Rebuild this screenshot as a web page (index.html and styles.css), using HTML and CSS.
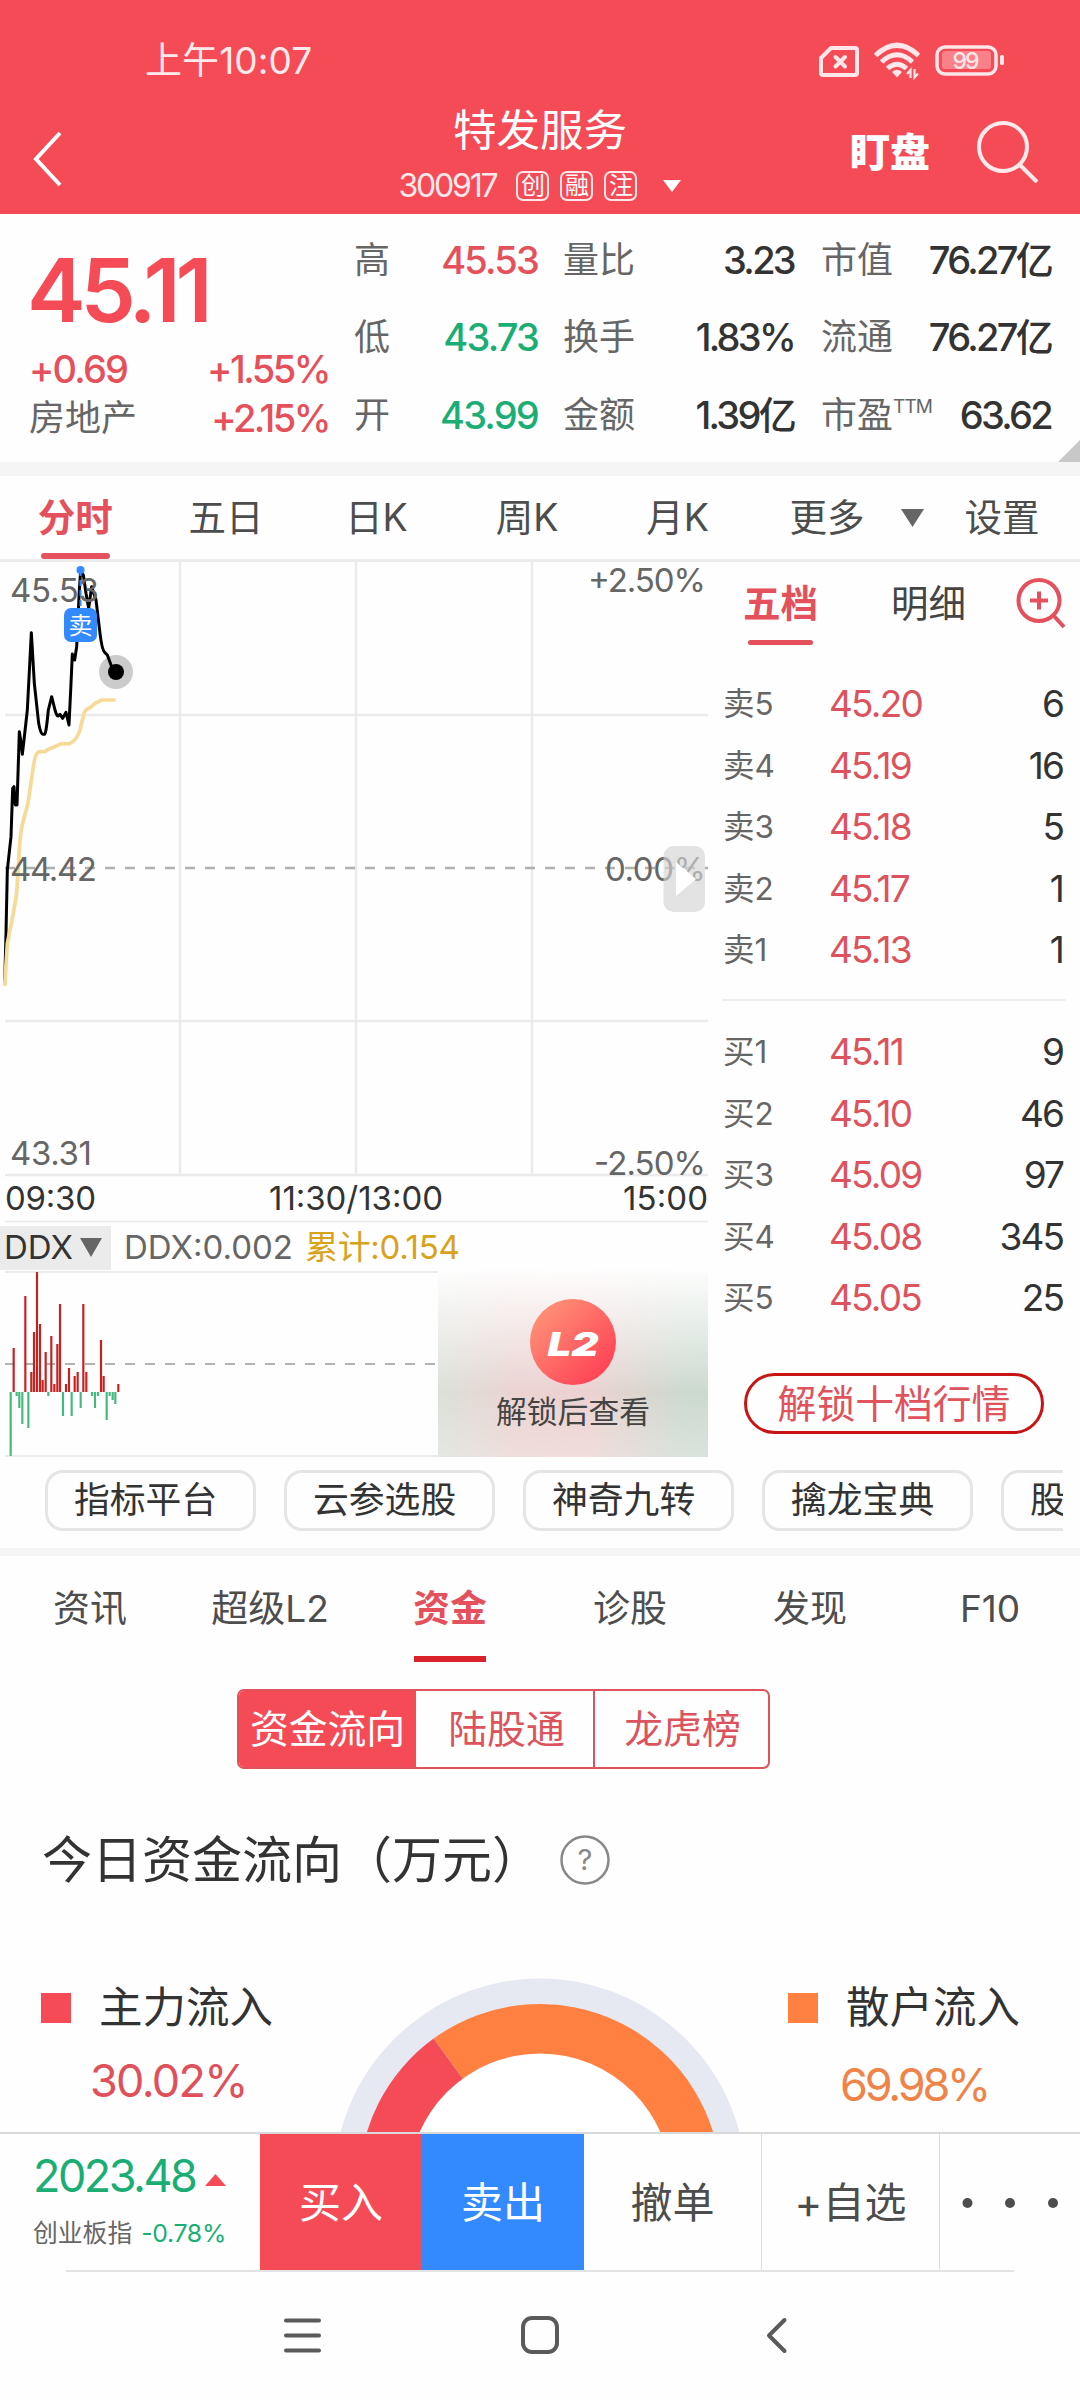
FILE: index.html
```html
<!DOCTYPE html>
<html lang="zh-CN">
<head>
<meta charset="utf-8">
<title>特发服务 300917</title>
<link rel="stylesheet" href="styles.css">
</head>
<body>
<div class="app">
  <header class="header">
    <div class="status">
      <span class="clock">上午10:07</span>
      <svg class="status-icons" width="190" height="40" viewBox="817 40 190 40">
        <g fill="none" stroke="#ffe6e8" stroke-width="4" stroke-linejoin="round" stroke-linecap="round">
          <path d="M831 48H855Q857 48 857 50V73Q857 75 855 75H823Q821 75 821 73V58Z"/>
          <path d="M835.5 57L845 66.500M845 57L835.500 66.500"/>
          <rect x="937" y="47" width="59" height="27" rx="8" stroke-width="3.500"/>
        </g>
        <g fill="none" stroke="#ffe6e8" stroke-width="5">
          <path d="M875.500 55.500Q897 35 918.500 55.500"/>
          <path d="M881.500 62Q897 47.500 912.500 62"/>
          <path d="M887.500 68.500Q897 60 906.500 68.500"/>
        </g>
        <path d="M892 72Q897 67.500 902 72L897 77.500Z" fill="#ffe6e8"/>
        <path d="M910.500 78V70L907 74M914.500 69V77.500L918 73.500" fill="none" stroke="#ffe6e8" stroke-width="2.200"/>
        <rect x="942" y="51" width="49" height="18" rx="3" fill="#fa8189"/>
        <rect x="1000" y="55" width="4" height="10" rx="1.500" fill="#ffe6e8"/>
        <text x="952.500" y="68.500" class="battery" textLength="27">99</text>
      </svg>
    </div>
    <div class="titlebar">
      <svg class="back" width="34" height="60" viewBox="0 0 34 60"><path d="M29 4L5 30L29 56" fill="none" stroke="#fff" stroke-width="4"/></svg>
      <div class="stock">
        <h1>特发服务</h1>
        <div class="code"><span class="num">300917</span><i>创</i><i>融</i><i>注</i><svg width="18" height="12" viewBox="0 0 18 12"><path d="M0 0H18L9 12Z" fill="#fff"/></svg></div>
      </div>
      <span class="watch">盯盘</span>
      <svg class="search" width="64" height="64" viewBox="975 119 64 64"><g fill="none" stroke="#ffe9ea" stroke-width="4"><circle cx="1003" cy="147" r="24"/><path d="M1019 164L1037 182"/></g></svg>
    </div>
  </header>

  <section class="quote">
    <div class="main">
      <strong class="price">45.11</strong>
      <div class="pair"><span class="up">+0.69</span><span class="up pct">+1.55%</span></div>
      <div class="pair"><span class="lbl">房地产</span><span class="up pct">+2.15%</span></div>
    </div>
    <dl class="stats s1">
      <dt>高</dt><dd class="up">45.53</dd><dt>低</dt><dd class="down">43.73</dd><dt>开</dt><dd class="down">43.99</dd>
    </dl>
    <dl class="stats s2">
      <dt>量比</dt><dd>3.23</dd><dt>换手</dt><dd>1.83%</dd><dt>金额</dt><dd>1.39亿</dd>
    </dl>
    <dl class="stats s3">
      <dt>市值</dt><dd>76.27亿</dd><dt>流通</dt><dd>76.27亿</dd><dt>市盈<sup>TTM</sup></dt><dd>63.62</dd>
    </dl>
    <svg class="corner" width="22" height="22" viewBox="0 0 22 22"><path d="M22 0V22H0Z" fill="#c8c8c8"/></svg>
  </section>

  <nav class="periods">
    <a class="on"><span>分时</span></a><a>五日</a><a>日K</a><a>周K</a><a>月K</a>
    <a class="more">更多</a><svg width="23" height="18" viewBox="0 0 23 18"><path d="M0 0H23L11.500 18Z" fill="#666"/></svg><a class="set">设置</a>
  </nav>

  <section class="market">
    <div class="charts">
      <svg class="chart" width="710" height="663" viewBox="0 562 710 663">
        <g fill="none" stroke="#ebebeb" stroke-width="2.500">
          <path d="M180 562V1175M356 562V1175M532 562V1175M5 715H708M5 1021H708M5 1175H708"/>
          <path d="M5 1221.500H708" stroke-width="1.500"/>
        </g>
        <path d="M5 868H708" stroke="#b0b0b0" stroke-width="2.500" stroke-dasharray="10 10"/>
        <g transform="translate(0 550) scale(.33333)" fill="none" stroke-width="9" stroke-linejoin="round">
          <path stroke="#000" d="M14 1305L18 1150L22 960L33 860L38 715L42 710L46 765L51 765L58 545L62 570L67 613L72 570L82 480L94 248L103 400L116 520Q122 553 128 553H134Q138 553 145 480L155 440L165 480Q170 498 174 498L180 493L188 505L198 487L207 525L213 400L217 312L224 330L230 290L238 120L242 62L250 75L258 130L266 175L275 110L288 150L300 250Q306 300 314 307L322 315L335 350L347 366"/>
          <path stroke="#f6da95" stroke-width="11" d="M14 1308L22 1180L40 1090L50 1030L56 930Q60 850 68 820L84 760L100 650Q106 606 118 605H135Q145 597 160 592L182 582L208 581Q230 572 240 540L250 498Q255 478 265 476Q273 472 285 460L305 450H347"/>
        </g>
        <circle cx="116" cy="672" r="17" fill="#000" fill-opacity=".2"/>
        <circle cx="116" cy="672" r="8" fill="#000"/>
        <g class="axis">
          <text x="10" y="602" textLength="89">45.53</text>
          <text x="588" y="592" textLength="118">+2.50%</text>
          <text x="10" y="881" textLength="87">44.42</text>
          <text x="605" y="881" textLength="101">0.00%</text>
          <text x="10" y="1165" textLength="82">43.31</text>
          <text x="594" y="1175" textLength="112">-2.50%</text>
        </g>
        <path d="M80.500 570V608" stroke="#338aff" stroke-width="2" stroke-dasharray="6 4"/>
        <circle cx="80.500" cy="570" r="4" fill="#338aff"/>
        <rect x="64" y="608" width="33" height="34" rx="7" fill="#338aff"/>
        <text x="68.500" y="634" class="sell-tag">卖</text>
        <g class="axis time">
          <text x="5" y="1210" textLength="91">09:30</text>
          <text x="269" y="1210" textLength="174">11:30/13:00</text>
          <text x="623" y="1210" textLength="85">15:00</text>
        </g>
        <rect x="663.500" y="846" width="41.500" height="66" rx="10" fill="#d4d4d4" fill-opacity=".65"/>
        <path d="M676 862L696 879L676 896Z" fill="#fff"/>
      </svg>
      <div class="ddx">
        <span class="pick">DDX<svg width="22" height="19" viewBox="0 0 22 19"><path d="M0 0H22L11 19Z" fill="#666"/></svg></span>
        <span class="v1">DDX:0.002</span><span class="v2">累计:0.154</span>
      </div>
      <div class="flow">
        <svg width="438" height="187" viewBox="0 1270 438 187">
          <path d="M5 1272H438M5 1456H438" stroke="#ebebeb" stroke-width="2"/>
          <path d="M5 1364H438" stroke="#b0b0b0" stroke-width="2.200" stroke-dasharray="10 10"/>
          <g transform="translate(0 1210) scale(.33333)" stroke-width="6.500">
            <path stroke="#c8201e" d="M41 546V414M76 546V258M94 546V486M102 546V366M111 546V186M120 546V342M128 546V510M137 546V426M154 546V378M163 546V522M172 546V402M180 546V282M198 546V522M207 546V474M224 546V498M233 546V486M250 546V282M259 546V486M303 546V390M311 546V498M355 546V522"/>
            <path stroke="#45b87c" d="M32 546V738M50 546V558M58 546V594M67 546V642M85 546V654M145 546V558M189 546V618M215 546V618M242 546V594M276 546V558M285 546V594M294 546V558M320 546V630M329 546V558M338 546V570M346 546V582"/>
          </g>
        </svg>
        <div class="unlock"><div class="badge"><b>L2</b></div><span>解锁后查看</span></div>
      </div>
    </div>
    <aside class="book">
      <div class="book-tabs"><a class="on"><span>五档</span></a><a>明细</a>
        <svg width="50" height="52" viewBox="1016 577 50 52"><g fill="none" stroke="#e4505b" stroke-width="4"><circle cx="1039" cy="600.500" r="20.500"/><path d="M1030 600.500H1048M1039 591.500V609.500M1053 615L1064 627"/></g></svg>
      </div>
      <ul class="sell">
        <li><span>卖5</span><b>45.20</b><em>6</em></li>
        <li><span>卖4</span><b>45.19</b><em>16</em></li>
        <li><span>卖3</span><b>45.18</b><em>5</em></li>
        <li><span>卖2</span><b>45.17</b><em>1</em></li>
        <li><span>卖1</span><b>45.13</b><em>1</em></li>
      </ul>
      <ul class="buy">
        <li><span>买1</span><b>45.11</b><em>9</em></li>
        <li><span>买2</span><b>45.10</b><em>46</em></li>
        <li><span>买3</span><b>45.09</b><em>97</em></li>
        <li><span>买4</span><b>45.08</b><em>345</em></li>
        <li><span>买5</span><b>45.05</b><em>25</em></li>
      </ul>
      <a class="ten">解锁十档行情</a>
    </aside>
  </section>

  <div class="pills"><a>指标平台</a><a>云参选股</a><a>神奇九转</a><a>擒龙宝典</a><a>股</a></div>

  <nav class="info"><a>资讯</a><a>超级L2</a><a class="on"><span>资金</span></a><a>诊股</a><a>发现</a><a>F10</a></nav>

  <section class="funds">
    <div class="segment"><a class="on">资金流向</a><a>陆股通</a><a>龙虎榜</a></div>
    <h2>今日资金流向（万元）<svg width="52" height="52" viewBox="0 0 52 52"><circle cx="26" cy="26" r="23.500" fill="none" stroke="#888" stroke-width="2.500"/><text x="26" y="36" text-anchor="middle" class="help">?</text></svg></h2>
    <div class="ring">
      <div class="legend main-in"><p><i></i>主力流入</p><strong>30.02%</strong></div>
      <svg width="420" height="155" viewBox="330 1977 420 155">
        <circle cx="540" cy="2185" r="206.400" fill="#e6e9f2"/>
        <path d="M359 2185A181 181 0 0 1 433.600 2038.600L540 2185Z" fill="#f54b56"/>
        <path d="M433.600 2038.600A181 181 0 0 1 721 2185H540Z" fill="#ff8040"/>
        <circle cx="540" cy="2185" r="131.500" fill="#fff"/>
      </svg>
      <div class="legend retail-in"><p><i></i>散户流入</p><strong>69.98%</strong></div>
    </div>
  </section>

  <footer class="trade">
    <div class="index"><p class="val">2023.48<svg width="21" height="12" viewBox="0 0 21 12"><path d="M10.500 0L21 12H0Z" fill="#f54b56"/></svg></p><p class="name">创业板指 <span>-0.78%</span></p></div>
    <a class="b">买入</a><a class="s">卖出</a><a class="o">撤单</a><a class="o">+自选</a>
    <a class="dots"><svg width="96" height="12" viewBox="0 0 96 12"><g fill="#4d4d4d"><circle cx="5.500" cy="6" r="5"/><circle cx="48" cy="6" r="5"/><circle cx="91" cy="6" r="5"/></g></svg></a>
  </footer>
  <div class="sysnav">
    <svg width="520" height="44" viewBox="275 2313 520 44"><g fill="none" stroke="#5a5a5a" stroke-width="4" stroke-linecap="round" stroke-linejoin="round"><path d="M286 2320.500H319M286 2335.500H319M286 2350.500H319"/><rect x="523" y="2318" width="34" height="34" rx="9"/><path d="M784.500 2320L769 2335.500L784.500 2351"/></g></svg>
  </div>
</div>
</body>
</html>
```
FILE: styles.css
```css
* { box-sizing: border-box; margin: 0; padding: 0; }
body {
  width: 1080px;
  background: #fff;
  color: #333;
  font-family: Inter, "Noto Sans CJK SC", sans-serif;
  font-size: 36px;
  line-height: 1;
}
ul { list-style: none; }
i, em { font-style: normal; }
svg { display: block; flex: none; }
.app { width: 1080px; height: 2400px; overflow: hidden; display: flex; flex-direction: column; background: #fefefe; }
.app > * { flex: none; }
.up { color: #e5505b; }
.down { color: #1aae75; }

.header { height: 214px; background: #f54b56; color: #fff; }
.status { height: 100px; padding: 20px 73px 0 145px; display: flex; justify-content: space-between; align-items: center; }
.clock { font-size: 37px; letter-spacing: .1px; color: #ffe9ea; }
.battery { font-size: 23px; font-weight: 500; fill: #ffe6e8; }
.titlebar { height: 114px; display: grid; grid-template-columns: 320px 440px 1fr auto; padding-right: 41px; }
.back { margin: 29px 0 0 31px; }
.stock { display: flex; flex-direction: column; align-items: center; }
h1 { font-size: 43.500px; font-weight: 400; line-height: 61px; }
.code { display: flex; align-items: center; height: 54px; font-size: 32px; margin-top: -2px; }
.code .num { letter-spacing: -2.200px; margin-right: 20px; color: #ffe9ea; }
.code i { width: 33px; height: 30px; border: 2px solid #ffe6e8; border-radius: 7px; font-size: 24px; line-height: 25px; text-align: center; margin-right: 11px; }
.code svg { margin-left: 15px; }
.watch { font-size: 40px; font-weight: 800; line-height: 106px; padding-left: 90px; }
.search { margin-top: 19px; }

.quote { position: relative; height: 262px; border-bottom: 14px solid #f5f5f5; display: flex; font-weight: 500; letter-spacing: -.05em; white-space: nowrap; }
.main { width: 328px; padding: 39px 0 0 29px; }
.price { display: block; height: 91px; font-size: 88px; line-height: 75px; color: #f54b56; font-weight: 600; letter-spacing: -5.200px; margin-left: -2px; }
.main .pair { height: 49px; display: flex; justify-content: space-between; align-items: center; font-size: 38px; }
.lbl, dt { font-weight: 400; font-size: 36px; letter-spacing: 0; color: #666; }
.pct { letter-spacing: -2.500px; margin-right: -1px; }
.stats { display: grid; grid-template-columns: auto 1fr; grid-auto-rows: 77.500px; align-items: center; align-content: start; padding-top: 7px; }
.stats dd { text-align: right; font-size: 38px; }
.s2 dd, .s3 dd { letter-spacing: -2.700px; padding-right: 1px; }
.s1 { width: 184px; margin-left: 26px; }
.s2 { width: 232px; margin-left: 25px; }
.s3 { width: 231px; margin-left: 26px; }
sup { font-size: 19px; letter-spacing: -.900px; vertical-align: 15px; line-height: 0; }
.s3 dt { width: 90px; }
.corner { position: absolute; right: 0; bottom: 0; }

.periods { height: 86px; border-bottom: 3px solid #ebebeb; display: flex; align-items: center; font-size: 37.500px; color: #4d4d4d; }
.periods a { width: 150.600px; height: 83px; line-height: 83px; text-align: center; }
.on { font-weight: 700; color: #e4505b; }
.on span { white-space: nowrap; display: flex; justify-content: center; }
.periods .on span::after, .book-tabs .on span::after { content: ""; display: block; height: 6px; border-radius: 3px; background: #e4505b; }
.periods .on span, .book-tabs .on span { flex-direction: column; align-items: center; line-height: 77px; height: 83px; padding-top: 3px; }
.periods .on span::after { width: 69px; margin-top: -3px; }
.periods .more { width: 148px; }
.periods .set { width: 156px; }

.market { height: 895px; display: flex; }
.charts { width: 710px; }
.axis { font-size: 33px; fill: #666; }
.time { fill: #333; }
.sell-tag { font-size: 24px; fill: #fff; }
.ddx { height: 45px; display: flex; align-items: center; font-size: 33px; color: #666; white-space: nowrap; }
.pick { width: 111px; height: 44px; background: #ebebeb; color: #333; display: flex; align-items: center; justify-content: space-between; padding: 0 9px 0 4px; }
.v1 { margin-left: 13px; }
.v2 { margin-left: 12px; letter-spacing: -.300px; color: #d9a21b; }
.flow { display: flex; height: 187px; }
.unlock {
  width: 270px; display: flex; flex-direction: column; align-items: center; padding-top: 29px;
  background:
    linear-gradient(180deg, rgba(255,255,255,.95), rgba(255,255,255,.45) 35%, rgba(255,255,255,0) 65%, rgba(255,255,255,.25)),
    linear-gradient(90deg, #dbe0d9, #ead3d1 28%, #ecd2d1 55%, #ced9d0 90%, #cbdacf);
}
.badge { width: 86px; height: 86px; border-radius: 50%; background: linear-gradient(135deg, #ff9d7c, #ff3550); color: #fff; text-align: center; }
.badge b { display: block; font-size: 33px; font-style: italic; font-weight: 900; line-height: 90px; transform: scaleX(1.28); }
.unlock span { font-size: 30.800px; margin-top: 12px; color: #444; }

.book { width: 370px; padding-left: 12px; }
.book-tabs { height: 111px; display: flex; font-size: 37.500px; color: #444; padding-left: 19px; }
.book-tabs a { height: 83px; line-height: 84px; }
.book-tabs .on span { width: 79px; }
.book-tabs .on span::after { width: 65px; margin-top: -2px; }
.book-tabs a + a { margin-left: 71px; }
.book-tabs svg { margin: 15px 0 0 50px; }
.book li { height: 61.500px; display: grid; grid-template-columns: 106px 1fr auto; align-items: center; width: 342px; padding-left: 1px; }
.book li span { font-size: 31.500px; color: #666; }
.book li b { font-size: 37px; font-weight: 400; letter-spacing: -1.800px; color: #dc535d; }
.book li em { font-size: 37px; letter-spacing: -1.900px; padding-right: 1px; }
.sell { width: 344px; height: 328px; border-bottom: 2px solid #ededed; }
.buy { padding-top: 20px; height: 372px; }
.ten { display: block; width: 300px; height: 61px; margin-left: 22px; border: 3px solid #c81414; border-radius: 31px; font-size: 38.800px; line-height: 55px; text-align: center; color: #e0525c; white-space: nowrap; }

.pills { width: 1063px; height: 91px; overflow: hidden; display: flex; gap: 28px; padding: 13px 0 0 45px; }
.pills a { flex: none; width: 211px; height: 61px; border: 3px solid #e6e4e4; border-radius: 18px; padding-left: 26px; line-height: 55px; font-size: 35.800px; }

.info { height: 123px; border-top: 8px solid #f5f5f5; display: flex; font-size: 37px; color: #4d4d4d; }
.info a { width: 180px; line-height: 106px; text-align: center; }
.info .on span { width: 72px; height: 106px; margin: 0 auto; border-bottom: 6px solid #d9222a; }

.funds { height: 461px; }
.segment { width: 533px; height: 80px; margin: 18px 0 0 237px; border: 2px solid #e0525c; border-radius: 7px; display: grid; grid-template-columns: 177px 177px 1fr; font-size: 38.800px; line-height: 76px; text-align: center; color: #dc535d; overflow: hidden; }
.segment a + a { padding-left: 4px; }
.segment a + a + a { border-left: 2px solid #dc535d; padding-left: 2px; }
.segment .on { background: #f54b56; color: #fff; font-weight: 400; }
h2 { display: flex; align-items: center; height: 100px; margin-top: 41px; padding-left: 42px; font-size: 50px; font-weight: 400; white-space: nowrap; }
h2 svg { margin-left: 17px; }
.help { font-size: 29px; fill: #888; }
.ring { display: flex; justify-content: space-between; height: 155px; margin-top: 67px; }
.legend { width: 330px; }
.legend p { display: flex; align-items: center; font-size: 43.500px; height: 62px; }
.legend i { width: 30px; height: 30px; background: #f54b56; margin: 0 28px 0 41px; }
.legend strong { display: block; font-weight: 400; font-size: 45px; letter-spacing: -1.700px; color: #e0505b; margin: 19px 0 0 90px; }
.retail-in i { background: #ff8040; margin-left: 38px; margin-right: 28px; }
.retail-in strong { color: #f08348; margin: 23px 0 0 90px; letter-spacing: -3.200px; }

.trade { height: 139px; border-top: 2px solid #d9d9d9; display: flex; font-size: 42px; line-height: 138px; text-align: center; }
.index { width: 260px; padding: 15px 0 0 33px; text-align: left; line-height: 1; }
.val { display: flex; align-items: center; font-size: 45px; letter-spacing: -2.500px; color: #1aae75; height: 52px; }
.val svg { margin: 10px 0 0 10px; }
.name { font-size: 24.800px; color: #666; margin-top: 20px; white-space: nowrap; }
.name span { color: #1aae75; letter-spacing: -.300px; margin-left: 2px; }
.b, .s { width: 162px; color: #fff; background: #f54b56; height: 136px; }
.s { background: #338aff; }
.o { width: 178px; color: #4d4d4d; border-right: 1.500px solid #dedede; height: 136px; }
.dots { width: 140px; display: flex; align-items: center; padding-left: 22px; }
.sysnav { margin: -1px 66px 0; border-top: 2px solid #e3e3e3; padding: 41px 0 0 209px; height: 128px; }
```
